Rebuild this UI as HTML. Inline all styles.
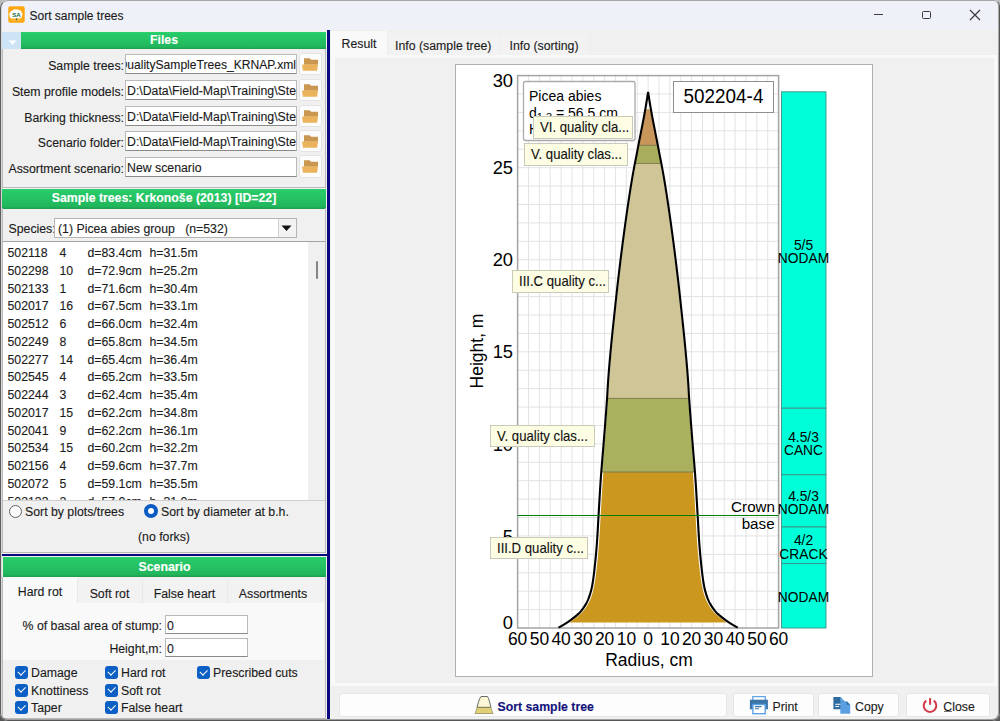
<!DOCTYPE html><html><head><meta charset="utf-8"><style>
*{box-sizing:border-box;margin:0;padding:0}
html,body{width:1000px;height:721px;overflow:hidden;background:linear-gradient(#bdbdbd 50%,#575757 50%)}
body{font-family:"Liberation Sans",sans-serif;font-size:12.3px;color:#1b1b1b;position:relative;-webkit-text-stroke:0.12px currentColor}
.a{position:absolute}
.hdr{position:absolute;background:linear-gradient(#2ad26d 0%,#27c968 12%,#24c062 55%,#21b55b 88%,#1c9a4c 100%);color:#fff;font-weight:bold;text-align:center;font-size:12.3px;line-height:17px}
.lbl{position:absolute;text-align:right;white-space:nowrap;line-height:14px;margin-top:1px}
.inp{position:absolute;background:#fff;border:1px solid #b9b9b9;border-bottom-color:#8a8a8a;white-space:nowrap;overflow:hidden;line-height:17px;padding-left:1px;padding-top:2px}
.fbtn{position:absolute;background:#fcfcfc;border:1px solid #e4e4e4;border-radius:3px}
.t{position:absolute;white-space:nowrap}
.tab{position:absolute;white-space:nowrap;text-align:center}
.cb{position:absolute;width:13px;height:13px;background:#0b5fc5;border-radius:3px}
.cb:after{content:"";position:absolute;left:3px;top:2.5px;width:6px;height:3.5px;border-left:1.5px solid #fff;border-bottom:1.5px solid #fff;transform:rotate(-45deg)}
.tip{position:absolute;background:#fdfde3;border:1px solid #cacab8;white-space:nowrap;font-size:14.3px;line-height:21px;padding-left:6px;color:#111}.tip span{display:inline-block;transform:scaleX(0.92);transform-origin:0 0;margin-top:0px}
.btn{position:absolute;background:#fdfdfd;border:1px solid #e6e6e6;border-radius:3px}
</style></head><body>
<div class="a" style="left:0;top:0;width:1000px;height:721px;background:#f0f0f0;border-radius:8px 6px 8px 8px;overflow:hidden">
<div class="a" style="left:0;top:0;width:1000px;height:30px;background:#eef1f7"></div>
<svg class="a" style="left:7.5px;top:6px" width="17" height="17" viewBox="0 0 17 17"><rect x="0.3" y="0.3" width="16.4" height="16.4" rx="2" fill="#fda60f"/><path d="M4 12.5c-1.8 0-2.6-1.3-2.2-2.6c-1-0.9-0.8-2.6 0.5-3.1c-0.2-1.6 1.2-2.6 2.5-2.2c0.6-1.3 2.2-1.6 3.2-0.8c0.9-1 2.7-0.8 3.2 0.5c1.5-0.3 2.6 0.9 2.3 2.3c1.3 0.6 1.4 2.3 0.3 3.1c0.4 1.4-0.6 2.8-2.2 2.8z" fill="#fff"/><rect x="7.9" y="12.3" width="1.3" height="2.4" fill="#2c6a3a"/><path d="M3.5 14.2h10" stroke="#ffd27a" stroke-width="0.6"/><text x="8.5" y="10.6" font-size="6.2" font-weight="bold" text-anchor="middle" fill="#236b3f" font-family="Liberation Sans">SA</text></svg>
<div class="t" style="left:29.5px;top:8.8px;font-size:12px;line-height:14px;color:#1a1a1a">Sort sample trees</div>
<div class="a" style="left:874px;top:14.2px;width:9.3px;height:1.2px;background:#3c3c3c"></div>
<div class="a" style="left:922px;top:10.6px;width:8.6px;height:8.4px;border:1.3px solid #3c3c3c;border-radius:1.5px"></div>
<svg class="a" style="left:968.6px;top:8.8px" width="12" height="12" viewBox="0 0 12 12"><path d="M1 1L11 11M11 1L1 11" stroke="#3a3a3a" stroke-width="1.15"/></svg>
<div class="hdr" style="left:2px;top:32px;width:324px;height:17px">Files</div>
<div class="a" style="left:2px;top:32px;width:19px;height:17px;background:#cde4f7"></div>
<svg class="a" style="left:7.6px;top:39.5px" width="9" height="6"><path d="M0.5 0.5H8.5L4.5 5Z" fill="#fff"/></svg>
<div class="a" style="left:2px;top:49px;width:324px;height:139px;border:1px solid #bababa;border-top:none"></div>
<div class="lbl" style="right:876px;top:58px">Sample trees:</div>
<div class="inp" style="left:125px;top:54px;width:172px;height:20px;direction:rtl;text-align:left;font-size:12.1px"><span style="direction:ltr;unicode-bidi:bidi-override">QualitySampleTrees_KRNAP.xml</span></div>
<div class="fbtn" style="left:299px;top:52.5px;width:22.5px;height:22.5px"></div>
<svg class="a" style="left:302px;top:57.5px" width="16" height="14" viewBox="0 0 16 14"><path d="M2 0.3h5.6l1.6 1.5h7v5h-14.2z" fill="#c9974f"/><path d="M0 6.6h16l-0.9 6.2h-14.2z" fill="#ebb35c"/></svg>
<div class="lbl" style="right:876px;top:84px">Stem profile models:</div>
<div class="inp" style="left:125px;top:80px;width:172px;height:20px">D:\Data\Field-Map\Training\Stem</div>
<div class="fbtn" style="left:299px;top:78.5px;width:22.5px;height:22.5px"></div>
<svg class="a" style="left:302px;top:83.5px" width="16" height="14" viewBox="0 0 16 14"><path d="M2 0.3h5.6l1.6 1.5h7v5h-14.2z" fill="#c9974f"/><path d="M0 6.6h16l-0.9 6.2h-14.2z" fill="#ebb35c"/></svg>
<div class="lbl" style="right:876px;top:110px">Barking thickness:</div>
<div class="inp" style="left:125px;top:106px;width:172px;height:20px">D:\Data\Field-Map\Training\Stem</div>
<div class="fbtn" style="left:299px;top:104.5px;width:22.5px;height:22.5px"></div>
<svg class="a" style="left:302px;top:109.5px" width="16" height="14" viewBox="0 0 16 14"><path d="M2 0.3h5.6l1.6 1.5h7v5h-14.2z" fill="#c9974f"/><path d="M0 6.6h16l-0.9 6.2h-14.2z" fill="#ebb35c"/></svg>
<div class="lbl" style="right:876px;top:135px">Scenario folder:</div>
<div class="inp" style="left:125px;top:131px;width:172px;height:20px">D:\Data\Field-Map\Training\Stem</div>
<div class="fbtn" style="left:299px;top:129.5px;width:22.5px;height:22.5px"></div>
<svg class="a" style="left:302px;top:134.5px" width="16" height="14" viewBox="0 0 16 14"><path d="M2 0.3h5.6l1.6 1.5h7v5h-14.2z" fill="#c9974f"/><path d="M0 6.6h16l-0.9 6.2h-14.2z" fill="#ebb35c"/></svg>
<div class="lbl" style="right:876px;top:160.5px">Assortment scenario:</div>
<div class="inp" style="left:125px;top:156.5px;width:172px;height:20px">New scenario</div>
<div class="fbtn" style="left:299px;top:155.0px;width:22.5px;height:22.5px"></div>
<svg class="a" style="left:302px;top:160.0px" width="16" height="14" viewBox="0 0 16 14"><path d="M2 0.3h5.6l1.6 1.5h7v5h-14.2z" fill="#c9974f"/><path d="M0 6.6h16l-0.9 6.2h-14.2z" fill="#ebb35c"/></svg>
<div class="hdr" style="left:2px;top:189px;width:324px;height:19.5px;line-height:19.5px">Sample trees: Krkono&#353;e (2013) [ID=22]</div>
<div class="a" style="left:2px;top:208px;width:324px;height:345px;border:1px solid #bababa;border-top:none"></div>
<div class="lbl" style="left:8.5px;top:221px;text-align:left">Species:</div>
<div class="inp" style="left:54px;top:218px;width:243px;height:20px;border-color:#b5b5b5;padding-left:5px;line-height:17px;padding-left:3px;padding-top:1.5px">(1) Picea abies group &nbsp;&nbsp;(n=532)</div>
<div class="a" style="left:278px;top:219px;width:18px;height:18px;background:#f3f3f3;border-left:1px solid #d0d0d0"></div>
<svg class="a" style="left:281px;top:225px" width="11" height="7"><path d="M0.5 0.5H10.5L5.5 6Z" fill="#111"/></svg>
<div class="a" style="left:3px;top:241.3px;width:322px;height:259.7px;background:#fff;border-top:1.8px solid #a3a3a3;border-bottom:1px solid #cfcfcf;overflow:hidden">
<div class="t" style="left:4.5px;top:3.90px;line-height:14px">502118</div><div class="t" style="left:56.5px;top:3.90px;line-height:14px">4</div><div class="t" style="left:84.5px;top:3.90px;line-height:14px">d=83.4cm</div><div class="t" style="left:146.5px;top:3.90px;line-height:14px">h=31.5m</div>
<div class="t" style="left:4.5px;top:21.65px;line-height:14px">502298</div><div class="t" style="left:56.5px;top:21.65px;line-height:14px">10</div><div class="t" style="left:84.5px;top:21.65px;line-height:14px">d=72.9cm</div><div class="t" style="left:146.5px;top:21.65px;line-height:14px">h=25.2m</div>
<div class="t" style="left:4.5px;top:39.40px;line-height:14px">502133</div><div class="t" style="left:56.5px;top:39.40px;line-height:14px">1</div><div class="t" style="left:84.5px;top:39.40px;line-height:14px">d=71.6cm</div><div class="t" style="left:146.5px;top:39.40px;line-height:14px">h=30.4m</div>
<div class="t" style="left:4.5px;top:57.15px;line-height:14px">502017</div><div class="t" style="left:56.5px;top:57.15px;line-height:14px">16</div><div class="t" style="left:84.5px;top:57.15px;line-height:14px">d=67.5cm</div><div class="t" style="left:146.5px;top:57.15px;line-height:14px">h=33.1m</div>
<div class="t" style="left:4.5px;top:74.90px;line-height:14px">502512</div><div class="t" style="left:56.5px;top:74.90px;line-height:14px">6</div><div class="t" style="left:84.5px;top:74.90px;line-height:14px">d=66.0cm</div><div class="t" style="left:146.5px;top:74.90px;line-height:14px">h=32.4m</div>
<div class="t" style="left:4.5px;top:92.65px;line-height:14px">502249</div><div class="t" style="left:56.5px;top:92.65px;line-height:14px">8</div><div class="t" style="left:84.5px;top:92.65px;line-height:14px">d=65.8cm</div><div class="t" style="left:146.5px;top:92.65px;line-height:14px">h=34.5m</div>
<div class="t" style="left:4.5px;top:110.40px;line-height:14px">502277</div><div class="t" style="left:56.5px;top:110.40px;line-height:14px">14</div><div class="t" style="left:84.5px;top:110.40px;line-height:14px">d=65.4cm</div><div class="t" style="left:146.5px;top:110.40px;line-height:14px">h=36.4m</div>
<div class="t" style="left:4.5px;top:128.15px;line-height:14px">502545</div><div class="t" style="left:56.5px;top:128.15px;line-height:14px">4</div><div class="t" style="left:84.5px;top:128.15px;line-height:14px">d=65.2cm</div><div class="t" style="left:146.5px;top:128.15px;line-height:14px">h=33.5m</div>
<div class="t" style="left:4.5px;top:145.90px;line-height:14px">502244</div><div class="t" style="left:56.5px;top:145.90px;line-height:14px">3</div><div class="t" style="left:84.5px;top:145.90px;line-height:14px">d=62.4cm</div><div class="t" style="left:146.5px;top:145.90px;line-height:14px">h=35.4m</div>
<div class="t" style="left:4.5px;top:163.65px;line-height:14px">502017</div><div class="t" style="left:56.5px;top:163.65px;line-height:14px">15</div><div class="t" style="left:84.5px;top:163.65px;line-height:14px">d=62.2cm</div><div class="t" style="left:146.5px;top:163.65px;line-height:14px">h=34.8m</div>
<div class="t" style="left:4.5px;top:181.40px;line-height:14px">502041</div><div class="t" style="left:56.5px;top:181.40px;line-height:14px">9</div><div class="t" style="left:84.5px;top:181.40px;line-height:14px">d=62.2cm</div><div class="t" style="left:146.5px;top:181.40px;line-height:14px">h=36.1m</div>
<div class="t" style="left:4.5px;top:199.15px;line-height:14px">502534</div><div class="t" style="left:56.5px;top:199.15px;line-height:14px">15</div><div class="t" style="left:84.5px;top:199.15px;line-height:14px">d=60.2cm</div><div class="t" style="left:146.5px;top:199.15px;line-height:14px">h=32.2m</div>
<div class="t" style="left:4.5px;top:216.90px;line-height:14px">502156</div><div class="t" style="left:56.5px;top:216.90px;line-height:14px">4</div><div class="t" style="left:84.5px;top:216.90px;line-height:14px">d=59.6cm</div><div class="t" style="left:146.5px;top:216.90px;line-height:14px">h=37.7m</div>
<div class="t" style="left:4.5px;top:234.65px;line-height:14px">502072</div><div class="t" style="left:56.5px;top:234.65px;line-height:14px">5</div><div class="t" style="left:84.5px;top:234.65px;line-height:14px">d=59.1cm</div><div class="t" style="left:146.5px;top:234.65px;line-height:14px">h=35.5m</div>
<div class="t" style="left:4.5px;top:252.40px;line-height:14px">502133</div><div class="t" style="left:56.5px;top:252.40px;line-height:14px">2</div><div class="t" style="left:84.5px;top:252.40px;line-height:14px">d=57.0cm</div><div class="t" style="left:146.5px;top:252.40px;line-height:14px">h=31.0m</div>
<div class="a" style="left:305px;top:0;width:17px;height:261px;background:#f0f0f0"></div>
<div class="a" style="left:312.5px;top:19px;width:2.5px;height:18px;background:#858585;border-radius:2px"></div>
</div>
<div class="a" style="left:8.5px;top:504.5px;width:13.5px;height:13.5px;border:1px solid #626262;border-radius:50%;background:#fafafa"></div>
<div class="t" style="left:25px;top:505.2px;line-height:14px">Sort by plots/trees</div>
<div class="a" style="left:143.5px;top:504px;width:14px;height:14px;border-radius:50%;background:#0a5cc2"></div>
<div class="a" style="left:147.5px;top:508px;width:6px;height:6px;border-radius:50%;background:#fff"></div>
<div class="t" style="left:161px;top:504.8px;line-height:14px">Sort by diameter at b.h.</div>
<div class="t" style="left:138px;top:530px;line-height:14px">(no forks)</div>
<div class="a" style="left:327px;top:30px;width:3px;height:691px;background:#0a0a80"></div>
<div class="a" style="left:2px;top:554px;width:325px;height:2px;background:#0a0a80"></div>
<div class="hdr" style="left:3px;top:557px;width:323px;height:20px;line-height:20px">Scenario</div>
<div class="a" style="left:2px;top:577px;width:324px;height:142px;background:#f0f0f0;border:1px solid #bababa;border-top:none"></div>
<div class="a" style="left:3px;top:577px;width:74px;height:27px;background:#f9f9f9"></div>
<div class="tab" style="left:3px;top:585px;width:74px">Hard rot</div>
<div class="a" style="left:77px;top:580px;width:65px;height:23px;background:#f2f2f2;border-left:1px solid #e8e8e8"></div>
<div class="tab" style="left:77px;top:587px;width:65px">Soft rot</div>
<div class="a" style="left:142px;top:580px;width:85px;height:23px;background:#f2f2f2;border-left:1px solid #e8e8e8"></div>
<div class="tab" style="left:142px;top:587px;width:85px">False heart</div>
<div class="a" style="left:227px;top:580px;width:92px;height:23px;background:#f2f2f2;border-left:1px solid #e8e8e8"></div>
<div class="tab" style="left:227px;top:587px;width:92px">Assortments</div>
<div class="a" style="left:3px;top:603px;width:321px;height:57px;background:#f9f9f9"></div>
<div class="lbl" style="right:838px;top:618px">% of basal area of stump:</div>
<div class="inp" style="left:165px;top:615px;width:83px;height:19px;line-height:17px">0</div>
<div class="lbl" style="right:838px;top:641px">Height,m:</div>
<div class="inp" style="left:165px;top:638px;width:83px;height:19px;line-height:17px">0</div>
<div class="cb" style="left:14.5px;top:666px"></div><div class="t" style="left:31px;top:666px;line-height:14px">Damage</div>
<div class="cb" style="left:14.5px;top:683.5px"></div><div class="t" style="left:31px;top:683.5px;line-height:14px">Knottiness</div>
<div class="cb" style="left:14.5px;top:701px"></div><div class="t" style="left:31px;top:701px;line-height:14px">Taper</div>
<div class="cb" style="left:104.5px;top:666px"></div><div class="t" style="left:121px;top:666px;line-height:14px">Hard rot</div>
<div class="cb" style="left:104.5px;top:683.5px"></div><div class="t" style="left:121px;top:683.5px;line-height:14px">Soft rot</div>
<div class="cb" style="left:104.5px;top:701px"></div><div class="t" style="left:121px;top:701px;line-height:14px">False heart</div>
<div class="cb" style="left:196.5px;top:666px"></div><div class="t" style="left:213px;top:666px;line-height:14px">Prescribed cuts</div>
<div class="a" style="left:331px;top:31px;width:56px;height:27px;background:#f9f9f9"></div>
<div class="tab" style="left:331px;top:37px;width:56px">Result</div>
<div class="a" style="left:386.5px;top:34px;width:113.5px;height:21px;background:#f2f2f2;border-left:1px solid #ededed"></div>
<div class="tab" style="left:386.5px;top:39px;width:113.5px">Info (sample tree)</div>
<div class="a" style="left:500px;top:34px;width:88px;height:21px;background:#f2f2f2;border-left:1px solid #ededed"></div>
<div class="tab" style="left:500px;top:39px;width:88px">Info (sorting)</div>
<div class="a" style="left:331px;top:55px;width:666px;height:631px;background:#f9f9f9"></div>
<div class="a" style="left:335px;top:58px;width:659px;height:625px;background:#f0f0f0"></div>
<div class="a" style="left:455px;top:63.5px;width:418px;height:613px;background:#fff;border:1px solid #b0b0b0"></div>
<svg class="a" style="left:0;top:0" width="1000" height="721" viewBox="0 0 1000 721" font-family="Liberation Sans"><path d="M528.48 75.6V628.0 M539.35 75.6V628.0 M550.23 75.6V628.0 M561.10 75.6V628.0 M571.98 75.6V628.0 M582.85 75.6V628.0 M593.73 75.6V628.0 M604.60 75.6V628.0 M615.48 75.6V628.0 M626.35 75.6V628.0 M637.23 75.6V628.0 M648.10 75.6V628.0 M658.98 75.6V628.0 M669.85 75.6V628.0 M680.73 75.6V628.0 M691.60 75.6V628.0 M702.48 75.6V628.0 M713.35 75.6V628.0 M724.23 75.6V628.0 M735.10 75.6V628.0 M745.98 75.6V628.0 M756.85 75.6V628.0 M767.73 75.6V628.0 M517.6 94.01H778.6 M517.6 112.43H778.6 M517.6 130.84H778.6 M517.6 149.25H778.6 M517.6 167.67H778.6 M517.6 186.08H778.6 M517.6 204.49H778.6 M517.6 222.91H778.6 M517.6 241.32H778.6 M517.6 259.73H778.6 M517.6 278.15H778.6 M517.6 296.56H778.6 M517.6 314.97H778.6 M517.6 333.39H778.6 M517.6 351.80H778.6 M517.6 370.21H778.6 M517.6 388.63H778.6 M517.6 407.04H778.6 M517.6 425.45H778.6 M517.6 443.87H778.6 M517.6 462.28H778.6 M517.6 480.69H778.6 M517.6 499.11H778.6 M517.6 517.52H778.6 M517.6 535.93H778.6 M517.6 554.35H778.6 M517.6 572.76H778.6 M517.6 591.17H778.6 M517.6 609.59H778.6" stroke="#e3e3e3" stroke-width="1" fill="none"/><rect x="517.6" y="75.6" width="261.0" height="552.4" fill="none" stroke="#a3a3a3" stroke-width="1.5"/><polygon points="645.60,109.30 645.50,109.90 645.32,110.90 645.14,111.90 644.96,112.90 644.78,113.90 644.60,114.90 644.41,115.90 644.23,116.90 644.04,117.90 643.85,118.90 643.66,119.90 643.47,120.90 643.28,121.90 643.08,122.90 642.89,123.90 642.69,124.90 642.50,125.90 642.30,126.90 642.10,127.90 641.91,128.90 641.71,129.90 641.51,130.90 641.31,131.90 641.12,132.90 640.92,133.90 640.72,134.90 640.52,135.90 640.33,136.90 640.13,137.90 639.93,138.90 639.74,139.90 639.54,140.90 639.35,141.90 639.16,142.90 638.97,143.90 638.78,144.90 638.70,145.30 657.50,145.30 657.42,144.90 657.23,143.90 657.04,142.90 656.85,141.90 656.66,140.90 656.46,139.90 656.27,138.90 656.07,137.90 655.87,136.90 655.68,135.90 655.48,134.90 655.28,133.90 655.08,132.90 654.89,131.90 654.69,130.90 654.49,129.90 654.29,128.90 654.10,127.90 653.90,126.90 653.70,125.90 653.51,124.90 653.31,123.90 653.12,122.90 652.92,121.90 652.73,120.90 652.54,119.90 652.35,118.90 652.16,117.90 651.97,116.90 651.79,115.90 651.60,114.90 651.42,113.90 651.24,112.90 651.06,111.90 650.88,110.90 650.70,109.90 650.60,109.30" fill="#c8955a" stroke="none"/><polygon points="638.70,145.30 638.59,145.90 638.40,146.90 638.20,147.90 638.01,148.90 637.82,149.90 637.63,150.90 637.43,151.90 637.24,152.90 637.04,153.90 636.85,154.90 636.66,155.90 636.46,156.90 636.27,157.90 636.07,158.90 635.88,159.90 635.69,160.90 635.49,161.90 635.30,162.90 635.21,163.40 660.99,163.40 660.90,162.90 660.71,161.90 660.51,160.90 660.32,159.90 660.13,158.90 659.93,157.90 659.74,156.90 659.54,155.90 659.35,154.90 659.16,153.90 658.96,152.90 658.77,151.90 658.57,150.90 658.38,149.90 658.19,148.90 658.00,147.90 657.80,146.90 657.61,145.90 657.50,145.30" fill="#a9ae5e" stroke="none"/><polygon points="635.81,163.40 635.71,163.90 635.52,164.90 635.33,165.90 635.14,166.90 634.95,167.90 634.77,168.90 634.58,169.90 634.40,170.90 634.21,171.90 634.03,172.90 633.85,173.90 633.68,174.90 633.50,175.90 633.33,176.90 633.15,177.90 632.98,178.90 632.82,179.90 632.65,180.90 632.49,181.90 632.32,182.90 632.16,183.90 631.99,184.90 631.83,185.90 631.67,186.90 631.51,187.90 631.35,188.90 631.19,189.90 631.03,190.90 630.88,191.90 630.72,192.90 630.56,193.90 630.41,194.90 630.25,195.90 630.10,196.90 629.95,197.90 629.79,198.90 629.64,199.90 629.49,200.90 629.34,201.90 629.19,202.90 629.04,203.90 628.89,204.90 628.74,205.90 628.60,206.90 628.45,207.90 628.30,208.90 628.16,209.90 628.01,210.90 627.87,211.90 627.72,212.90 627.58,213.90 627.44,214.90 627.29,215.90 627.15,216.90 627.01,217.90 626.87,218.90 626.73,219.90 626.59,220.90 626.45,221.90 626.31,222.90 626.17,223.90 626.03,224.90 625.90,225.90 625.76,226.90 625.62,227.90 625.49,228.90 625.35,229.90 625.22,230.90 625.08,231.90 624.95,232.90 624.81,233.90 624.68,234.90 624.54,235.90 624.41,236.90 624.28,237.90 624.15,238.90 624.01,239.90 623.88,240.90 623.75,241.90 623.62,242.90 623.49,243.90 623.36,244.90 623.23,245.90 623.10,246.90 622.97,247.90 622.84,248.90 622.71,249.90 622.58,250.90 622.46,251.90 622.33,252.90 622.20,253.90 622.08,254.90 621.95,255.90 621.82,256.90 621.70,257.90 621.57,258.90 621.45,259.90 621.33,260.90 621.20,261.90 621.08,262.90 620.96,263.90 620.83,264.90 620.71,265.90 620.59,266.90 620.47,267.90 620.35,268.90 620.23,269.90 620.11,270.90 619.99,271.90 619.87,272.90 619.75,273.90 619.63,274.90 619.51,275.90 619.40,276.90 619.28,277.90 619.16,278.90 619.05,279.90 618.93,280.90 618.81,281.90 618.70,282.90 618.59,283.90 618.47,284.90 618.36,285.90 618.24,286.90 618.13,287.90 618.02,288.90 617.91,289.90 617.80,290.90 617.68,291.90 617.57,292.90 617.46,293.90 617.35,294.90 617.24,295.90 617.14,296.90 617.03,297.90 616.92,298.90 616.81,299.90 616.70,300.90 616.60,301.90 616.49,302.90 616.38,303.90 616.27,304.90 616.17,305.90 616.06,306.90 615.95,307.90 615.84,308.90 615.74,309.90 615.63,310.90 615.52,311.90 615.41,312.90 615.31,313.90 615.20,314.90 615.09,315.90 614.99,316.90 614.88,317.90 614.77,318.90 614.67,319.90 614.56,320.90 614.46,321.90 614.35,322.90 614.24,323.90 614.14,324.90 614.03,325.90 613.93,326.90 613.83,327.90 613.72,328.90 613.62,329.90 613.51,330.90 613.41,331.90 613.31,332.90 613.21,333.90 613.10,334.90 613.00,335.90 612.90,336.90 612.80,337.90 612.70,338.90 612.60,339.90 612.50,340.90 612.40,341.90 612.30,342.90 612.20,343.90 612.11,344.90 612.01,345.90 611.91,346.90 611.82,347.90 611.72,348.90 611.63,349.90 611.53,350.90 611.44,351.90 611.35,352.90 611.25,353.90 611.16,354.90 611.07,355.90 610.98,356.90 610.89,357.90 610.80,358.90 610.71,359.90 610.62,360.90 610.54,361.90 610.45,362.90 610.37,363.90 610.28,364.90 610.20,365.90 610.11,366.90 610.03,367.90 609.95,368.90 609.87,369.90 609.79,370.90 609.71,371.90 609.63,372.90 609.55,373.90 609.48,374.90 609.40,375.90 609.33,376.90 609.25,377.90 609.18,378.90 609.11,379.90 609.04,380.90 608.97,381.90 608.90,382.90 608.84,383.90 608.78,384.90 608.72,385.90 608.66,386.90 608.60,387.90 608.55,388.90 608.49,389.90 608.43,390.90 608.37,391.90 608.32,392.90 608.26,393.90 608.20,394.90 608.14,395.90 608.07,396.90 608.01,397.90 607.97,398.40 688.23,398.40 688.19,397.90 688.13,396.90 688.06,395.90 688.00,394.90 687.94,393.90 687.88,392.90 687.83,391.90 687.77,390.90 687.71,389.90 687.65,388.90 687.60,387.90 687.54,386.90 687.48,385.90 687.42,384.90 687.36,383.90 687.30,382.90 687.23,381.90 687.16,380.90 687.09,379.90 687.02,378.90 686.95,377.90 686.87,376.90 686.80,375.90 686.72,374.90 686.65,373.90 686.57,372.90 686.49,371.90 686.41,370.90 686.33,369.90 686.25,368.90 686.17,367.90 686.09,366.90 686.00,365.90 685.92,364.90 685.83,363.90 685.75,362.90 685.66,361.90 685.58,360.90 685.49,359.90 685.40,358.90 685.31,357.90 685.22,356.90 685.13,355.90 685.04,354.90 684.95,353.90 684.85,352.90 684.76,351.90 684.67,350.90 684.57,349.90 684.48,348.90 684.38,347.90 684.29,346.90 684.19,345.90 684.09,344.90 684.00,343.90 683.90,342.90 683.80,341.90 683.70,340.90 683.60,339.90 683.50,338.90 683.40,337.90 683.30,336.90 683.20,335.90 683.10,334.90 682.99,333.90 682.89,332.90 682.79,331.90 682.69,330.90 682.58,329.90 682.48,328.90 682.37,327.90 682.27,326.90 682.17,325.90 682.06,324.90 681.96,323.90 681.85,322.90 681.74,321.90 681.64,320.90 681.53,319.90 681.43,318.90 681.32,317.90 681.21,316.90 681.11,315.90 681.00,314.90 680.89,313.90 680.79,312.90 680.68,311.90 680.57,310.90 680.46,309.90 680.36,308.90 680.25,307.90 680.14,306.90 680.03,305.90 679.93,304.90 679.82,303.90 679.71,302.90 679.60,301.90 679.50,300.90 679.39,299.90 679.28,298.90 679.17,297.90 679.06,296.90 678.96,295.90 678.85,294.90 678.74,293.90 678.63,292.90 678.52,291.90 678.40,290.90 678.29,289.90 678.18,288.90 678.07,287.90 677.96,286.90 677.84,285.90 677.73,284.90 677.61,283.90 677.50,282.90 677.39,281.90 677.27,280.90 677.15,279.90 677.04,278.90 676.92,277.90 676.80,276.90 676.69,275.90 676.57,274.90 676.45,273.90 676.33,272.90 676.21,271.90 676.09,270.90 675.97,269.90 675.85,268.90 675.73,267.90 675.61,266.90 675.49,265.90 675.37,264.90 675.24,263.90 675.12,262.90 675.00,261.90 674.87,260.90 674.75,259.90 674.63,258.90 674.50,257.90 674.38,256.90 674.25,255.90 674.12,254.90 674.00,253.90 673.87,252.90 673.74,251.90 673.62,250.90 673.49,249.90 673.36,248.90 673.23,247.90 673.10,246.90 672.97,245.90 672.84,244.90 672.71,243.90 672.58,242.90 672.45,241.90 672.32,240.90 672.19,239.90 672.05,238.90 671.92,237.90 671.79,236.90 671.66,235.90 671.52,234.90 671.39,233.90 671.25,232.90 671.12,231.90 670.98,230.90 670.85,229.90 670.71,228.90 670.58,227.90 670.44,226.90 670.30,225.90 670.17,224.90 670.03,223.90 669.89,222.90 669.75,221.90 669.61,220.90 669.47,219.90 669.33,218.90 669.19,217.90 669.05,216.90 668.91,215.90 668.76,214.90 668.62,213.90 668.48,212.90 668.33,211.90 668.19,210.90 668.04,209.90 667.90,208.90 667.75,207.90 667.60,206.90 667.46,205.90 667.31,204.90 667.16,203.90 667.01,202.90 666.86,201.90 666.71,200.90 666.56,199.90 666.41,198.90 666.25,197.90 666.10,196.90 665.95,195.90 665.79,194.90 665.64,193.90 665.48,192.90 665.32,191.90 665.17,190.90 665.01,189.90 664.85,188.90 664.69,187.90 664.53,186.90 664.37,185.90 664.21,184.90 664.04,183.90 663.88,182.90 663.71,181.90 663.55,180.90 663.38,179.90 663.22,178.90 663.05,177.90 662.87,176.90 662.70,175.90 662.52,174.90 662.35,173.90 662.17,172.90 661.99,171.90 661.80,170.90 661.62,169.90 661.43,168.90 661.25,167.90 661.06,166.90 660.87,165.90 660.68,164.90 660.49,163.90 660.39,163.40" fill="#cfc597" stroke="none"/><polygon points="607.97,398.40 607.94,398.90 607.87,399.90 607.80,400.90 607.73,401.90 607.66,402.90 607.59,403.90 607.52,404.90 607.45,405.90 607.38,406.90 607.30,407.90 607.23,408.90 607.15,409.90 607.08,410.90 607.00,411.90 606.93,412.90 606.85,413.90 606.78,414.90 606.70,415.90 606.62,416.90 606.54,417.90 606.47,418.90 606.39,419.90 606.31,420.90 606.23,421.90 606.15,422.90 606.07,423.90 605.99,424.90 605.92,425.90 605.84,426.90 605.76,427.90 605.68,428.90 605.60,429.90 605.52,430.90 605.44,431.90 605.36,432.90 605.28,433.90 605.20,434.90 605.12,435.90 605.04,436.90 604.96,437.90 604.89,438.90 604.81,439.90 604.73,440.90 604.65,441.90 604.57,442.90 604.49,443.90 604.41,444.90 604.33,445.90 604.25,446.90 604.16,447.90 604.08,448.90 604.00,449.90 603.91,450.90 603.83,451.90 603.75,452.90 603.66,453.90 603.58,454.90 603.50,455.90 603.41,456.90 603.33,457.90 603.24,458.90 603.16,459.90 603.08,460.90 602.99,461.90 602.91,462.90 602.83,463.90 602.75,464.90 602.67,465.90 602.59,466.90 602.51,467.90 602.43,468.90 602.35,469.90 602.27,470.90 602.19,471.90 602.18,472.00 694.02,472.00 694.01,471.90 693.93,470.90 693.85,469.90 693.77,468.90 693.69,467.90 693.61,466.90 693.53,465.90 693.45,464.90 693.37,463.90 693.29,462.90 693.21,461.90 693.12,460.90 693.04,459.90 692.96,458.90 692.87,457.90 692.79,456.90 692.70,455.90 692.62,454.90 692.54,453.90 692.45,452.90 692.37,451.90 692.29,450.90 692.20,449.90 692.12,448.90 692.04,447.90 691.95,446.90 691.87,445.90 691.79,444.90 691.71,443.90 691.63,442.90 691.55,441.90 691.47,440.90 691.39,439.90 691.31,438.90 691.24,437.90 691.16,436.90 691.08,435.90 691.00,434.90 690.92,433.90 690.84,432.90 690.76,431.90 690.68,430.90 690.60,429.90 690.52,428.90 690.44,427.90 690.36,426.90 690.28,425.90 690.21,424.90 690.13,423.90 690.05,422.90 689.97,421.90 689.89,420.90 689.81,419.90 689.73,418.90 689.66,417.90 689.58,416.90 689.50,415.90 689.42,414.90 689.35,413.90 689.27,412.90 689.20,411.90 689.12,410.90 689.05,409.90 688.97,408.90 688.90,407.90 688.82,406.90 688.75,405.90 688.68,404.90 688.61,403.90 688.54,402.90 688.47,401.90 688.40,400.90 688.33,399.90 688.26,398.90 688.23,398.40" fill="#a9b05e" stroke="none"/><polygon points="603.38,472.00 603.32,472.90 603.24,473.90 603.16,474.90 603.09,475.90 603.02,476.90 602.95,477.90 602.88,478.90 602.81,479.90 602.74,480.90 602.67,481.90 602.60,482.90 602.54,483.90 602.47,484.90 602.41,485.90 602.35,486.90 602.28,487.90 602.22,488.90 602.16,489.90 602.10,490.90 602.04,491.90 601.98,492.90 601.92,493.90 601.86,494.90 601.80,495.90 601.74,496.90 601.68,497.90 601.63,498.90 601.57,499.90 601.51,500.90 601.45,501.90 601.39,502.90 601.34,503.90 601.28,504.90 601.22,505.90 601.16,506.90 601.11,507.90 601.05,508.90 600.99,509.90 600.93,510.90 600.87,511.90 600.81,512.90 600.75,513.90 600.69,514.90 600.63,515.90 600.58,516.90 600.52,517.90 600.46,518.90 600.40,519.90 600.35,520.90 600.29,521.90 600.24,522.90 600.18,523.90 600.13,524.90 600.07,525.90 600.01,526.90 599.96,527.90 599.90,528.90 599.85,529.90 599.79,530.90 599.73,531.90 599.67,532.90 599.61,533.90 599.55,534.90 599.49,535.90 599.43,536.90 599.37,537.90 599.30,538.90 599.24,539.90 599.17,540.90 599.10,541.90 599.03,542.90 598.96,543.90 598.88,544.90 598.81,545.90 598.73,546.90 598.65,547.90 598.57,548.90 598.48,549.90 598.40,550.90 598.31,551.90 598.23,552.90 598.14,553.90 598.05,554.90 597.95,555.90 597.86,556.90 597.76,557.90 597.67,558.90 597.57,559.90 597.47,560.90 597.36,561.90 597.26,562.90 597.15,563.90 597.05,564.90 596.94,565.90 596.83,566.90 596.72,567.90 596.61,568.90 596.50,569.90 596.39,570.90 596.27,571.90 596.16,572.90 596.04,573.90 595.91,574.90 595.78,575.90 595.65,576.90 595.52,577.90 595.38,578.90 595.23,579.90 595.08,580.90 594.92,581.90 594.76,582.90 594.59,583.90 594.41,584.90 594.22,585.90 594.03,586.90 593.82,587.90 593.59,588.90 593.35,589.90 593.09,590.90 592.82,591.90 592.54,592.90 592.24,593.90 591.92,594.90 591.59,595.90 591.24,596.90 590.87,597.90 590.49,598.90 590.07,599.90 589.62,600.90 589.13,601.90 588.61,602.90 588.06,603.90 587.48,604.90 586.87,605.90 586.22,606.90 585.54,607.90 584.83,608.90 584.09,609.90 583.32,610.90 582.47,611.90 581.52,612.90 580.48,613.90 579.37,614.90 578.19,615.90 576.96,616.90 575.69,617.90 574.39,618.90 573.07,619.90 571.67,620.90 570.22,621.90 569.46,622.40 726.74,622.40 725.98,621.90 724.53,620.90 723.13,619.90 721.81,618.90 720.51,617.90 719.24,616.90 718.01,615.90 716.83,614.90 715.72,613.90 714.68,612.90 713.73,611.90 712.88,610.90 712.11,609.90 711.37,608.90 710.66,607.90 709.98,606.90 709.33,605.90 708.72,604.90 708.14,603.90 707.59,602.90 707.07,601.90 706.58,600.90 706.13,599.90 705.71,598.90 705.33,597.90 704.96,596.90 704.61,595.90 704.28,594.90 703.96,593.90 703.66,592.90 703.38,591.90 703.11,590.90 702.85,589.90 702.61,588.90 702.38,587.90 702.17,586.90 701.98,585.90 701.79,584.90 701.61,583.90 701.44,582.90 701.28,581.90 701.12,580.90 700.97,579.90 700.82,578.90 700.68,577.90 700.55,576.90 700.42,575.90 700.29,574.90 700.16,573.90 700.04,572.90 699.93,571.90 699.81,570.90 699.70,569.90 699.59,568.90 699.48,567.90 699.37,566.90 699.26,565.90 699.15,564.90 699.05,563.90 698.94,562.90 698.84,561.90 698.73,560.90 698.63,559.90 698.53,558.90 698.44,557.90 698.34,556.90 698.25,555.90 698.15,554.90 698.06,553.90 697.97,552.90 697.89,551.90 697.80,550.90 697.72,549.90 697.63,548.90 697.55,547.90 697.47,546.90 697.39,545.90 697.32,544.90 697.24,543.90 697.17,542.90 697.10,541.90 697.03,540.90 696.96,539.90 696.90,538.90 696.83,537.90 696.77,536.90 696.71,535.90 696.65,534.90 696.59,533.90 696.53,532.90 696.47,531.90 696.41,530.90 696.35,529.90 696.30,528.90 696.24,527.90 696.19,526.90 696.13,525.90 696.07,524.90 696.02,523.90 695.96,522.90 695.91,521.90 695.85,520.90 695.80,519.90 695.74,518.90 695.68,517.90 695.62,516.90 695.57,515.90 695.51,514.90 695.45,513.90 695.39,512.90 695.33,511.90 695.27,510.90 695.21,509.90 695.15,508.90 695.09,507.90 695.04,506.90 694.98,505.90 694.92,504.90 694.86,503.90 694.81,502.90 694.75,501.90 694.69,500.90 694.63,499.90 694.57,498.90 694.52,497.90 694.46,496.90 694.40,495.90 694.34,494.90 694.28,493.90 694.22,492.90 694.16,491.90 694.10,490.90 694.04,489.90 693.98,488.90 693.92,487.90 693.85,486.90 693.79,485.90 693.73,484.90 693.66,483.90 693.60,482.90 693.53,481.90 693.46,480.90 693.39,479.90 693.32,478.90 693.25,477.90 693.18,476.90 693.11,475.90 693.04,474.90 692.96,473.90 692.88,472.90 692.82,472.00" fill="#cb971e" stroke="none"/><path d="M639.40 145.3H656.80" stroke="#807a48" stroke-width="1"/><path d="M635.91 163.4H660.29" stroke="#807a48" stroke-width="1"/><path d="M608.07 398.4H688.13" stroke="#807a48" stroke-width="1"/><path d="M602.28 472H693.92" stroke="#807a48" stroke-width="1"/><path d="M648.10 91.90 L647.95 92.90 L647.80 93.90 L647.64 94.90 L647.49 95.90 L647.33 96.90 L647.18 97.90 L647.02 98.90 L646.86 99.90 L646.70 100.90 L646.54 101.90 L646.38 102.90 L646.21 103.90 L646.05 104.90 L645.88 105.90 L645.71 106.90 L645.54 107.90 L645.37 108.90 L645.20 109.90 L645.02 110.90 L644.84 111.90 L644.66 112.90 L644.48 113.90 L644.30 114.90 L644.11 115.90 L643.93 116.90 L643.74 117.90 L643.55 118.90 L643.36 119.90 L643.17 120.90 L642.98 121.90 L642.78 122.90 L642.59 123.90 L642.39 124.90 L642.20 125.90 L642.00 126.90 L641.80 127.90 L641.61 128.90 L641.41 129.90 L641.21 130.90 L641.01 131.90 L640.82 132.90 L640.62 133.90 L640.42 134.90 L640.22 135.90 L640.03 136.90 L639.83 137.90 L639.63 138.90 L639.44 139.90 L639.24 140.90 L639.05 141.90 L638.86 142.90 L638.67 143.90 L638.48 144.90 L638.29 145.90 L638.10 146.90 L637.90 147.90 L637.71 148.90 L637.52 149.90 L637.33 150.90 L637.13 151.90 L636.94 152.90 L636.74 153.90 L636.55 154.90 L636.36 155.90 L636.16 156.90 L635.97 157.90 L635.77 158.90 L635.58 159.90 L635.39 160.90 L635.19 161.90 L635.00 162.90 L634.81 163.90 L634.62 164.90 L634.43 165.90 L634.24 166.90 L634.05 167.90 L633.87 168.90 L633.68 169.90 L633.50 170.90 L633.31 171.90 L633.13 172.90 L632.95 173.90 L632.78 174.90 L632.60 175.90 L632.43 176.90 L632.25 177.90 L632.08 178.90 L631.92 179.90 L631.75 180.90 L631.59 181.90 L631.42 182.90 L631.26 183.90 L631.09 184.90 L630.93 185.90 L630.77 186.90 L630.61 187.90 L630.45 188.90 L630.29 189.90 L630.13 190.90 L629.98 191.90 L629.82 192.90 L629.66 193.90 L629.51 194.90 L629.35 195.90 L629.20 196.90 L629.05 197.90 L628.89 198.90 L628.74 199.90 L628.59 200.90 L628.44 201.90 L628.29 202.90 L628.14 203.90 L627.99 204.90 L627.84 205.90 L627.70 206.90 L627.55 207.90 L627.40 208.90 L627.26 209.90 L627.11 210.90 L626.97 211.90 L626.82 212.90 L626.68 213.90 L626.54 214.90 L626.39 215.90 L626.25 216.90 L626.11 217.90 L625.97 218.90 L625.83 219.90 L625.69 220.90 L625.55 221.90 L625.41 222.90 L625.27 223.90 L625.13 224.90 L625.00 225.90 L624.86 226.90 L624.72 227.90 L624.59 228.90 L624.45 229.90 L624.32 230.90 L624.18 231.90 L624.05 232.90 L623.91 233.90 L623.78 234.90 L623.64 235.90 L623.51 236.90 L623.38 237.90 L623.25 238.90 L623.11 239.90 L622.98 240.90 L622.85 241.90 L622.72 242.90 L622.59 243.90 L622.46 244.90 L622.33 245.90 L622.20 246.90 L622.07 247.90 L621.94 248.90 L621.81 249.90 L621.68 250.90 L621.56 251.90 L621.43 252.90 L621.30 253.90 L621.18 254.90 L621.05 255.90 L620.92 256.90 L620.80 257.90 L620.67 258.90 L620.55 259.90 L620.43 260.90 L620.30 261.90 L620.18 262.90 L620.06 263.90 L619.93 264.90 L619.81 265.90 L619.69 266.90 L619.57 267.90 L619.45 268.90 L619.33 269.90 L619.21 270.90 L619.09 271.90 L618.97 272.90 L618.85 273.90 L618.73 274.90 L618.61 275.90 L618.50 276.90 L618.38 277.90 L618.26 278.90 L618.15 279.90 L618.03 280.90 L617.91 281.90 L617.80 282.90 L617.69 283.90 L617.57 284.90 L617.46 285.90 L617.34 286.90 L617.23 287.90 L617.12 288.90 L617.01 289.90 L616.90 290.90 L616.78 291.90 L616.67 292.90 L616.56 293.90 L616.45 294.90 L616.34 295.90 L616.24 296.90 L616.13 297.90 L616.02 298.90 L615.91 299.90 L615.80 300.90 L615.70 301.90 L615.59 302.90 L615.48 303.90 L615.37 304.90 L615.27 305.90 L615.16 306.90 L615.05 307.90 L614.94 308.90 L614.84 309.90 L614.73 310.90 L614.62 311.90 L614.51 312.90 L614.41 313.90 L614.30 314.90 L614.19 315.90 L614.09 316.90 L613.98 317.90 L613.87 318.90 L613.77 319.90 L613.66 320.90 L613.56 321.90 L613.45 322.90 L613.34 323.90 L613.24 324.90 L613.13 325.90 L613.03 326.90 L612.93 327.90 L612.82 328.90 L612.72 329.90 L612.61 330.90 L612.51 331.90 L612.41 332.90 L612.31 333.90 L612.20 334.90 L612.10 335.90 L612.00 336.90 L611.90 337.90 L611.80 338.90 L611.70 339.90 L611.60 340.90 L611.50 341.90 L611.40 342.90 L611.30 343.90 L611.21 344.90 L611.11 345.90 L611.01 346.90 L610.92 347.90 L610.82 348.90 L610.73 349.90 L610.63 350.90 L610.54 351.90 L610.45 352.90 L610.35 353.90 L610.26 354.90 L610.17 355.90 L610.08 356.90 L609.99 357.90 L609.90 358.90 L609.81 359.90 L609.72 360.90 L609.64 361.90 L609.55 362.90 L609.47 363.90 L609.38 364.90 L609.30 365.90 L609.21 366.90 L609.13 367.90 L609.05 368.90 L608.97 369.90 L608.89 370.90 L608.81 371.90 L608.73 372.90 L608.65 373.90 L608.58 374.90 L608.50 375.90 L608.43 376.90 L608.35 377.90 L608.28 378.90 L608.21 379.90 L608.14 380.90 L608.07 381.90 L608.00 382.90 L607.94 383.90 L607.88 384.90 L607.82 385.90 L607.76 386.90 L607.70 387.90 L607.65 388.90 L607.59 389.90 L607.53 390.90 L607.47 391.90 L607.42 392.90 L607.36 393.90 L607.30 394.90 L607.24 395.90 L607.17 396.90 L607.11 397.90 L607.04 398.90 L606.97 399.90 L606.90 400.90 L606.83 401.90 L606.76 402.90 L606.69 403.90 L606.62 404.90 L606.55 405.90 L606.48 406.90 L606.40 407.90 L606.33 408.90 L606.25 409.90 L606.18 410.90 L606.10 411.90 L606.03 412.90 L605.95 413.90 L605.88 414.90 L605.80 415.90 L605.72 416.90 L605.64 417.90 L605.57 418.90 L605.49 419.90 L605.41 420.90 L605.33 421.90 L605.25 422.90 L605.17 423.90 L605.09 424.90 L605.02 425.90 L604.94 426.90 L604.86 427.90 L604.78 428.90 L604.70 429.90 L604.62 430.90 L604.54 431.90 L604.46 432.90 L604.38 433.90 L604.30 434.90 L604.22 435.90 L604.14 436.90 L604.06 437.90 L603.99 438.90 L603.91 439.90 L603.83 440.90 L603.75 441.90 L603.67 442.90 L603.59 443.90 L603.51 444.90 L603.43 445.90 L603.35 446.90 L603.26 447.90 L603.18 448.90 L603.10 449.90 L603.01 450.90 L602.93 451.90 L602.85 452.90 L602.76 453.90 L602.68 454.90 L602.60 455.90 L602.51 456.90 L602.43 457.90 L602.34 458.90 L602.26 459.90 L602.18 460.90 L602.09 461.90 L602.01 462.90 L601.93 463.90 L601.85 464.90 L601.77 465.90 L601.69 466.90 L601.61 467.90 L601.53 468.90 L601.45 469.90 L601.37 470.90 L601.29 471.90 L601.22 472.90 L601.14 473.90 L601.06 474.90 L600.99 475.90 L600.92 476.90 L600.85 477.90 L600.78 478.90 L600.71 479.90 L600.64 480.90 L600.57 481.90 L600.50 482.90 L600.44 483.90 L600.37 484.90 L600.31 485.90 L600.25 486.90 L600.18 487.90 L600.12 488.90 L600.06 489.90 L600.00 490.90 L599.94 491.90 L599.88 492.90 L599.82 493.90 L599.76 494.90 L599.70 495.90 L599.64 496.90 L599.58 497.90 L599.53 498.90 L599.47 499.90 L599.41 500.90 L599.35 501.90 L599.29 502.90 L599.24 503.90 L599.18 504.90 L599.12 505.90 L599.06 506.90 L599.01 507.90 L598.95 508.90 L598.89 509.90 L598.83 510.90 L598.77 511.90 L598.71 512.90 L598.65 513.90 L598.59 514.90 L598.53 515.90 L598.48 516.90 L598.42 517.90 L598.36 518.90 L598.30 519.90 L598.25 520.90 L598.19 521.90 L598.14 522.90 L598.08 523.90 L598.03 524.90 L597.97 525.90 L597.91 526.90 L597.86 527.90 L597.80 528.90 L597.75 529.90 L597.69 530.90 L597.63 531.90 L597.57 532.90 L597.51 533.90 L597.45 534.90 L597.39 535.90 L597.33 536.90 L597.27 537.90 L597.20 538.90 L597.14 539.90 L597.07 540.90 L597.00 541.90 L596.93 542.90 L596.86 543.90 L596.78 544.90 L596.71 545.90 L596.63 546.90 L596.55 547.90 L596.47 548.90 L596.38 549.90 L596.30 550.90 L596.21 551.90 L596.13 552.90 L596.04 553.90 L595.95 554.90 L595.85 555.90 L595.76 556.90 L595.66 557.90 L595.57 558.90 L595.47 559.90 L595.37 560.90 L595.26 561.90 L595.16 562.90 L595.05 563.90 L594.95 564.90 L594.84 565.90 L594.73 566.90 L594.62 567.90 L594.51 568.90 L594.40 569.90 L594.29 570.90 L594.17 571.90 L594.06 572.90 L593.94 573.90 L593.81 574.90 L593.68 575.90 L593.55 576.90 L593.42 577.90 L593.28 578.90 L593.13 579.90 L592.98 580.90 L592.82 581.90 L592.66 582.90 L592.49 583.90 L592.31 584.90 L592.12 585.90 L591.93 586.90 L591.72 587.90 L591.49 588.90 L591.25 589.90 L590.99 590.90 L590.72 591.90 L590.44 592.90 L590.14 593.90 L589.82 594.90 L589.49 595.90 L589.14 596.90 L588.77 597.90 L588.39 598.90 L587.97 599.90 L587.52 600.90 L587.03 601.90 L586.51 602.90 L585.96 603.90 L585.38 604.90 L584.77 605.90 L584.12 606.90 L583.44 607.90 L582.73 608.90 L581.99 609.90 L581.22 610.90 L580.37 611.90 L579.42 612.90 L578.38 613.90 L577.27 614.90 L576.09 615.90 L574.86 616.90 L573.59 617.90 L572.29 618.90 L570.97 619.90 L569.57 620.90 L568.12 621.90 L566.59 622.90 L565.01 623.90 L563.37 624.90 L561.68 625.90 L559.93 626.90 L558.50 627.70 M737.70 627.70 L736.27 626.90 L734.52 625.90 L732.83 624.90 L731.19 623.90 L729.61 622.90 L728.08 621.90 L726.63 620.90 L725.23 619.90 L723.91 618.90 L722.61 617.90 L721.34 616.90 L720.11 615.90 L718.93 614.90 L717.82 613.90 L716.78 612.90 L715.83 611.90 L714.98 610.90 L714.21 609.90 L713.47 608.90 L712.76 607.90 L712.08 606.90 L711.43 605.90 L710.82 604.90 L710.24 603.90 L709.69 602.90 L709.17 601.90 L708.68 600.90 L708.23 599.90 L707.81 598.90 L707.43 597.90 L707.06 596.90 L706.71 595.90 L706.38 594.90 L706.06 593.90 L705.76 592.90 L705.48 591.90 L705.21 590.90 L704.95 589.90 L704.71 588.90 L704.48 587.90 L704.27 586.90 L704.08 585.90 L703.89 584.90 L703.71 583.90 L703.54 582.90 L703.38 581.90 L703.22 580.90 L703.07 579.90 L702.92 578.90 L702.78 577.90 L702.65 576.90 L702.52 575.90 L702.39 574.90 L702.26 573.90 L702.14 572.90 L702.03 571.90 L701.91 570.90 L701.80 569.90 L701.69 568.90 L701.58 567.90 L701.47 566.90 L701.36 565.90 L701.25 564.90 L701.15 563.90 L701.04 562.90 L700.94 561.90 L700.83 560.90 L700.73 559.90 L700.63 558.90 L700.54 557.90 L700.44 556.90 L700.35 555.90 L700.25 554.90 L700.16 553.90 L700.07 552.90 L699.99 551.90 L699.90 550.90 L699.82 549.90 L699.73 548.90 L699.65 547.90 L699.57 546.90 L699.49 545.90 L699.42 544.90 L699.34 543.90 L699.27 542.90 L699.20 541.90 L699.13 540.90 L699.06 539.90 L699.00 538.90 L698.93 537.90 L698.87 536.90 L698.81 535.90 L698.75 534.90 L698.69 533.90 L698.63 532.90 L698.57 531.90 L698.51 530.90 L698.45 529.90 L698.40 528.90 L698.34 527.90 L698.29 526.90 L698.23 525.90 L698.17 524.90 L698.12 523.90 L698.06 522.90 L698.01 521.90 L697.95 520.90 L697.90 519.90 L697.84 518.90 L697.78 517.90 L697.72 516.90 L697.67 515.90 L697.61 514.90 L697.55 513.90 L697.49 512.90 L697.43 511.90 L697.37 510.90 L697.31 509.90 L697.25 508.90 L697.19 507.90 L697.14 506.90 L697.08 505.90 L697.02 504.90 L696.96 503.90 L696.91 502.90 L696.85 501.90 L696.79 500.90 L696.73 499.90 L696.67 498.90 L696.62 497.90 L696.56 496.90 L696.50 495.90 L696.44 494.90 L696.38 493.90 L696.32 492.90 L696.26 491.90 L696.20 490.90 L696.14 489.90 L696.08 488.90 L696.02 487.90 L695.95 486.90 L695.89 485.90 L695.83 484.90 L695.76 483.90 L695.70 482.90 L695.63 481.90 L695.56 480.90 L695.49 479.90 L695.42 478.90 L695.35 477.90 L695.28 476.90 L695.21 475.90 L695.14 474.90 L695.06 473.90 L694.98 472.90 L694.91 471.90 L694.83 470.90 L694.75 469.90 L694.67 468.90 L694.59 467.90 L694.51 466.90 L694.43 465.90 L694.35 464.90 L694.27 463.90 L694.19 462.90 L694.11 461.90 L694.02 460.90 L693.94 459.90 L693.86 458.90 L693.77 457.90 L693.69 456.90 L693.60 455.90 L693.52 454.90 L693.44 453.90 L693.35 452.90 L693.27 451.90 L693.19 450.90 L693.10 449.90 L693.02 448.90 L692.94 447.90 L692.85 446.90 L692.77 445.90 L692.69 444.90 L692.61 443.90 L692.53 442.90 L692.45 441.90 L692.37 440.90 L692.29 439.90 L692.21 438.90 L692.14 437.90 L692.06 436.90 L691.98 435.90 L691.90 434.90 L691.82 433.90 L691.74 432.90 L691.66 431.90 L691.58 430.90 L691.50 429.90 L691.42 428.90 L691.34 427.90 L691.26 426.90 L691.18 425.90 L691.11 424.90 L691.03 423.90 L690.95 422.90 L690.87 421.90 L690.79 420.90 L690.71 419.90 L690.63 418.90 L690.56 417.90 L690.48 416.90 L690.40 415.90 L690.32 414.90 L690.25 413.90 L690.17 412.90 L690.10 411.90 L690.02 410.90 L689.95 409.90 L689.87 408.90 L689.80 407.90 L689.72 406.90 L689.65 405.90 L689.58 404.90 L689.51 403.90 L689.44 402.90 L689.37 401.90 L689.30 400.90 L689.23 399.90 L689.16 398.90 L689.09 397.90 L689.03 396.90 L688.96 395.90 L688.90 394.90 L688.84 393.90 L688.78 392.90 L688.73 391.90 L688.67 390.90 L688.61 389.90 L688.55 388.90 L688.50 387.90 L688.44 386.90 L688.38 385.90 L688.32 384.90 L688.26 383.90 L688.20 382.90 L688.13 381.90 L688.06 380.90 L687.99 379.90 L687.92 378.90 L687.85 377.90 L687.77 376.90 L687.70 375.90 L687.62 374.90 L687.55 373.90 L687.47 372.90 L687.39 371.90 L687.31 370.90 L687.23 369.90 L687.15 368.90 L687.07 367.90 L686.99 366.90 L686.90 365.90 L686.82 364.90 L686.73 363.90 L686.65 362.90 L686.56 361.90 L686.48 360.90 L686.39 359.90 L686.30 358.90 L686.21 357.90 L686.12 356.90 L686.03 355.90 L685.94 354.90 L685.85 353.90 L685.75 352.90 L685.66 351.90 L685.57 350.90 L685.47 349.90 L685.38 348.90 L685.28 347.90 L685.19 346.90 L685.09 345.90 L684.99 344.90 L684.90 343.90 L684.80 342.90 L684.70 341.90 L684.60 340.90 L684.50 339.90 L684.40 338.90 L684.30 337.90 L684.20 336.90 L684.10 335.90 L684.00 334.90 L683.89 333.90 L683.79 332.90 L683.69 331.90 L683.59 330.90 L683.48 329.90 L683.38 328.90 L683.27 327.90 L683.17 326.90 L683.07 325.90 L682.96 324.90 L682.86 323.90 L682.75 322.90 L682.64 321.90 L682.54 320.90 L682.43 319.90 L682.33 318.90 L682.22 317.90 L682.11 316.90 L682.01 315.90 L681.90 314.90 L681.79 313.90 L681.69 312.90 L681.58 311.90 L681.47 310.90 L681.36 309.90 L681.26 308.90 L681.15 307.90 L681.04 306.90 L680.93 305.90 L680.83 304.90 L680.72 303.90 L680.61 302.90 L680.50 301.90 L680.40 300.90 L680.29 299.90 L680.18 298.90 L680.07 297.90 L679.96 296.90 L679.86 295.90 L679.75 294.90 L679.64 293.90 L679.53 292.90 L679.42 291.90 L679.30 290.90 L679.19 289.90 L679.08 288.90 L678.97 287.90 L678.86 286.90 L678.74 285.90 L678.63 284.90 L678.51 283.90 L678.40 282.90 L678.29 281.90 L678.17 280.90 L678.05 279.90 L677.94 278.90 L677.82 277.90 L677.70 276.90 L677.59 275.90 L677.47 274.90 L677.35 273.90 L677.23 272.90 L677.11 271.90 L676.99 270.90 L676.87 269.90 L676.75 268.90 L676.63 267.90 L676.51 266.90 L676.39 265.90 L676.27 264.90 L676.14 263.90 L676.02 262.90 L675.90 261.90 L675.77 260.90 L675.65 259.90 L675.53 258.90 L675.40 257.90 L675.28 256.90 L675.15 255.90 L675.02 254.90 L674.90 253.90 L674.77 252.90 L674.64 251.90 L674.52 250.90 L674.39 249.90 L674.26 248.90 L674.13 247.90 L674.00 246.90 L673.87 245.90 L673.74 244.90 L673.61 243.90 L673.48 242.90 L673.35 241.90 L673.22 240.90 L673.09 239.90 L672.95 238.90 L672.82 237.90 L672.69 236.90 L672.56 235.90 L672.42 234.90 L672.29 233.90 L672.15 232.90 L672.02 231.90 L671.88 230.90 L671.75 229.90 L671.61 228.90 L671.48 227.90 L671.34 226.90 L671.20 225.90 L671.07 224.90 L670.93 223.90 L670.79 222.90 L670.65 221.90 L670.51 220.90 L670.37 219.90 L670.23 218.90 L670.09 217.90 L669.95 216.90 L669.81 215.90 L669.66 214.90 L669.52 213.90 L669.38 212.90 L669.23 211.90 L669.09 210.90 L668.94 209.90 L668.80 208.90 L668.65 207.90 L668.50 206.90 L668.36 205.90 L668.21 204.90 L668.06 203.90 L667.91 202.90 L667.76 201.90 L667.61 200.90 L667.46 199.90 L667.31 198.90 L667.15 197.90 L667.00 196.90 L666.85 195.90 L666.69 194.90 L666.54 193.90 L666.38 192.90 L666.22 191.90 L666.07 190.90 L665.91 189.90 L665.75 188.90 L665.59 187.90 L665.43 186.90 L665.27 185.90 L665.11 184.90 L664.94 183.90 L664.78 182.90 L664.61 181.90 L664.45 180.90 L664.28 179.90 L664.12 178.90 L663.95 177.90 L663.77 176.90 L663.60 175.90 L663.42 174.90 L663.25 173.90 L663.07 172.90 L662.89 171.90 L662.70 170.90 L662.52 169.90 L662.33 168.90 L662.15 167.90 L661.96 166.90 L661.77 165.90 L661.58 164.90 L661.39 163.90 L661.20 162.90 L661.01 161.90 L660.81 160.90 L660.62 159.90 L660.43 158.90 L660.23 157.90 L660.04 156.90 L659.84 155.90 L659.65 154.90 L659.46 153.90 L659.26 152.90 L659.07 151.90 L658.87 150.90 L658.68 149.90 L658.49 148.90 L658.30 147.90 L658.10 146.90 L657.91 145.90 L657.72 144.90 L657.53 143.90 L657.34 142.90 L657.15 141.90 L656.96 140.90 L656.76 139.90 L656.57 138.90 L656.37 137.90 L656.17 136.90 L655.98 135.90 L655.78 134.90 L655.58 133.90 L655.38 132.90 L655.19 131.90 L654.99 130.90 L654.79 129.90 L654.59 128.90 L654.40 127.90 L654.20 126.90 L654.00 125.90 L653.81 124.90 L653.61 123.90 L653.42 122.90 L653.22 121.90 L653.03 120.90 L652.84 119.90 L652.65 118.90 L652.46 117.90 L652.27 116.90 L652.09 115.90 L651.90 114.90 L651.72 113.90 L651.54 112.90 L651.36 111.90 L651.18 110.90 L651.00 109.90 L650.83 108.90 L650.66 107.90 L650.49 106.90 L650.32 105.90 L650.15 104.90 L649.99 103.90 L649.82 102.90 L649.66 101.90 L649.50 100.90 L649.34 99.90 L649.18 98.90 L649.02 97.90 L648.87 96.90 L648.71 95.90 L648.56 94.90 L648.40 93.90 L648.25 92.90 L648.10 91.90" stroke="#000" stroke-width="2.1" fill="none" stroke-linejoin="miter"/><path d="M517.6 515.5H778.6" stroke="#008000" stroke-width="1.1"/><text x="0" y="0" font-size="18.7" text-anchor="end" transform="translate(513 629.1) scale(0.98 1)" fill="#000">0</text><text x="0" y="0" font-size="18.7" text-anchor="end" transform="translate(513 542.5) scale(0.98 1)" fill="#000">5</text><text x="0" y="0" font-size="18.7" text-anchor="end" transform="translate(513 450.5) scale(0.98 1)" fill="#000">10</text><text x="0" y="0" font-size="18.7" text-anchor="end" transform="translate(513 358.4) scale(0.98 1)" fill="#000">15</text><text x="0" y="0" font-size="18.7" text-anchor="end" transform="translate(513 266.3) scale(0.98 1)" fill="#000">20</text><text x="0" y="0" font-size="18.7" text-anchor="end" transform="translate(513 174.3) scale(0.98 1)" fill="#000">25</text><text x="0" y="0" font-size="18.7" text-anchor="end" transform="translate(513 86.6) scale(0.98 1)" fill="#000">30</text><text x="0" y="0" font-size="19" text-anchor="middle" transform="translate(517.6 645.3) scale(0.92 1)" fill="#000">60</text><text x="0" y="0" font-size="19" text-anchor="middle" transform="translate(539.4 645.3) scale(0.92 1)" fill="#000">50</text><text x="0" y="0" font-size="19" text-anchor="middle" transform="translate(561.1 645.3) scale(0.92 1)" fill="#000">40</text><text x="0" y="0" font-size="19" text-anchor="middle" transform="translate(582.9 645.3) scale(0.92 1)" fill="#000">30</text><text x="0" y="0" font-size="19" text-anchor="middle" transform="translate(604.6 645.3) scale(0.92 1)" fill="#000">20</text><text x="0" y="0" font-size="19" text-anchor="middle" transform="translate(626.4 645.3) scale(0.92 1)" fill="#000">10</text><text x="0" y="0" font-size="19" text-anchor="middle" transform="translate(648.1 645.3) scale(0.92 1)" fill="#000">0</text><text x="0" y="0" font-size="19" text-anchor="middle" transform="translate(669.9 645.3) scale(0.92 1)" fill="#000">10</text><text x="0" y="0" font-size="19" text-anchor="middle" transform="translate(691.6 645.3) scale(0.92 1)" fill="#000">20</text><text x="0" y="0" font-size="19" text-anchor="middle" transform="translate(713.4 645.3) scale(0.92 1)" fill="#000">30</text><text x="0" y="0" font-size="19" text-anchor="middle" transform="translate(735.1 645.3) scale(0.92 1)" fill="#000">40</text><text x="0" y="0" font-size="19" text-anchor="middle" transform="translate(756.9 645.3) scale(0.92 1)" fill="#000">50</text><text x="0" y="0" font-size="19" text-anchor="middle" transform="translate(778.6 645.3) scale(0.92 1)" fill="#000">60</text><text x="649" y="666" font-size="17.5" text-anchor="middle" fill="#000">Radius, cm</text><text transform="translate(483 351) rotate(-90)" font-size="17.5" text-anchor="middle" fill="#000">Height, m</text><text x="775" y="512" font-size="15.2" text-anchor="end" fill="#000">Crown</text><text x="774.6" y="529.3" font-size="15.2" text-anchor="end" fill="#000">base</text><rect x="781.5" y="91.8" width="44.5" height="316.4" fill="#00ffd9" stroke="#3f8f84" stroke-width="0.9"/><rect x="781.5" y="408.2" width="44.5" height="66.60000000000002" fill="#00ffd9" stroke="#3f8f84" stroke-width="0.9"/><rect x="781.5" y="474.8" width="44.5" height="52.19999999999999" fill="#00ffd9" stroke="#3f8f84" stroke-width="0.9"/><rect x="781.5" y="527" width="44.5" height="36.60000000000002" fill="#00ffd9" stroke="#3f8f84" stroke-width="0.9"/><rect x="781.5" y="563.6" width="44.5" height="64.39999999999998" fill="#00ffd9" stroke="#3f8f84" stroke-width="0.9"/><text x="803.5" y="250.0" font-size="13.8" text-anchor="middle" fill="#000">5/5</text><text x="803.5" y="263.3" font-size="13.8" text-anchor="middle" fill="#000">NODAM</text><text x="803.5" y="441.5" font-size="13.8" text-anchor="middle" fill="#000">4.5/3</text><text x="803.5" y="454.8" font-size="13.8" text-anchor="middle" fill="#000">CANC</text><text x="803.5" y="500.9" font-size="13.8" text-anchor="middle" fill="#000">4.5/3</text><text x="803.5" y="514.2" font-size="13.8" text-anchor="middle" fill="#000">NODAM</text><text x="803.5" y="545.3" font-size="13.8" text-anchor="middle" fill="#000">4/2</text><text x="803.5" y="558.6" font-size="13.8" text-anchor="middle" fill="#000">CRACK</text><text x="803.5" y="602.4" font-size="13.8" text-anchor="middle" fill="#000">NODAM</text><rect x="673.5" y="81.5" width="100" height="31" fill="#fff" stroke="#8f8f8f" stroke-width="1"/><text x="723.5" y="103.4" font-size="21" text-anchor="middle" transform="translate(723.5 0) scale(0.9 1) translate(-723.5 0)" fill="#000">502204-4</text><rect x="523.5" y="81.5" width="111.5" height="59" rx="2" fill="#fff" stroke="#ababab" stroke-width="1.3"/><text x="529" y="100.6" font-size="14" fill="#000">Picea abies</text><text x="529" y="118.4" font-size="14" fill="#000">d<tspan font-size="11" dy="2.5">1.3</tspan><tspan dy="-2.5"> = 56.5 cm</tspan></text><text x="529" y="133.7" font-size="14" fill="#000">H</text></svg>
<div class="tip" style="left:532.5px;top:116.3px;width:100.0px;height:23.1px;line-height:21.1px"><span>VI. quality cla...</span></div>
<div class="tip" style="left:523.6px;top:143px;width:104.0px;height:23.0px;line-height:21.0px"><span>V. quality clas...</span></div>
<div class="tip" style="left:512px;top:270.2px;width:97.3px;height:22.9px;line-height:20.9px"><span>III.C quality c...</span></div>
<div class="tip" style="left:490.3px;top:424.7px;width:105.2px;height:22.6px;line-height:20.6px"><span>V. quality clas...</span></div>
<div class="tip" style="left:490.3px;top:536.5px;width:97.9px;height:22.5px;line-height:20.5px"><span>III.D quality c...</span></div>
<div class="btn" style="left:339px;top:693px;width:388px;height:23.5px"></div>
<svg class="a" style="left:470px;top:694px" width="24" height="22" viewBox="0 0 24 22"><path d="M11 2.5h6.6c1.4 2.6 2.3 6.3 3.2 10.7c0.5 3.2 1.6 5 2.1 6.3h-17.8c0.5-1.3 1.6-3.1 2.1-6.3c0.9-4.4 1.9-8.1 3.8-10.7z" fill="#fdf7d6" stroke="#5a5a5a" stroke-width="0.9"/><path d="M7.2 13.3h13.6c0.5 3.2 1.6 5 2.1 6.2h-17.8c0.5-1.2 1.6-3 2.1-6.2z" fill="#e1cf78"/><path d="M7.2 13.3h13.6" stroke="#66664a" stroke-width="0.9"/></svg>
<div class="t" style="left:497.5px;top:699.5px;font-weight:bold;color:#12127a;line-height:14px">Sort sample tree</div>
<div class="btn" style="left:733px;top:693px;width:81px;height:23.5px"></div>
<svg class="a" style="left:748px;top:694px" width="22" height="22" viewBox="0 0 22 22"><rect x="4.8" y="2.6" width="12.5" height="4.5" fill="#fff" stroke="#63a5e6" stroke-width="1.3"/><rect x="1.9" y="5.7" width="18" height="9.6" fill="#3b75a8"/><rect x="4.9" y="10.5" width="12.3" height="9.2" fill="#fff" stroke="#5aa0e6" stroke-width="1.4"/><path d="M7 12.6h6.5M7 14.8h4" stroke="#3b75a8" stroke-width="1.1"/></svg>
<div class="t" style="left:772.5px;top:699.5px;line-height:14px">Print</div>
<div class="btn" style="left:817.5px;top:693px;width:81.5px;height:23.5px"></div>
<svg class="a" style="left:832px;top:695px" width="20" height="20" viewBox="0 0 20 20"><path d="M1.4 2h7l3.9 4v8.3h-10.9z" fill="#2d6aa0"/><path d="M8.4 2l3.9 4h-3.9z" fill="#6aaee8"/><path d="M3.3 9.2h6M3.3 11.5h3.8" stroke="#fff" stroke-width="1.1"/><path d="M8.3 6.2h6.4l3.5 3.6v9h-9.9z" fill="#5a9fe0"/><path d="M14.7 6.2l3.5 3.6h-3.5z" fill="#2d6aa0"/></svg>
<div class="t" style="left:855px;top:699.5px;line-height:14px">Copy</div>
<div class="btn" style="left:905.5px;top:693px;width:84px;height:23.5px"></div>
<svg class="a" style="left:921px;top:697px" width="18" height="18" viewBox="0 0 18 18"><path d="M5.2 3.6A6.3 6.3 0 1 0 12.8 3.6" fill="none" stroke="#d23b48" stroke-width="2"/><path d="M9.1 0.9V7.8" stroke="#d23b48" stroke-width="2"/></svg>
<div class="t" style="left:943.3px;top:699.5px;line-height:14px">Close</div>
<div class="a" style="left:944px;top:710.5px;width:8px;height:1px;background:#777"></div>
</div>
<div class="a" style="left:1px;top:1px;width:998px;height:719px;border-left:1px solid #d6d6d6;border-right:1px solid #a8a8a8;border-bottom:1px solid #a0a0a0;border-radius:7px 5px 7px 7px;pointer-events:none"></div>
<div class="a" style="left:0;top:0;width:1000px;height:721px;border-left:1px solid #5e5e5e;border-top:1px solid #a6a6a6;border-right:1px solid #585858;border-bottom:1px solid #555;border-radius:8px 6px 8px 8px;pointer-events:none"></div>
</body></html>
